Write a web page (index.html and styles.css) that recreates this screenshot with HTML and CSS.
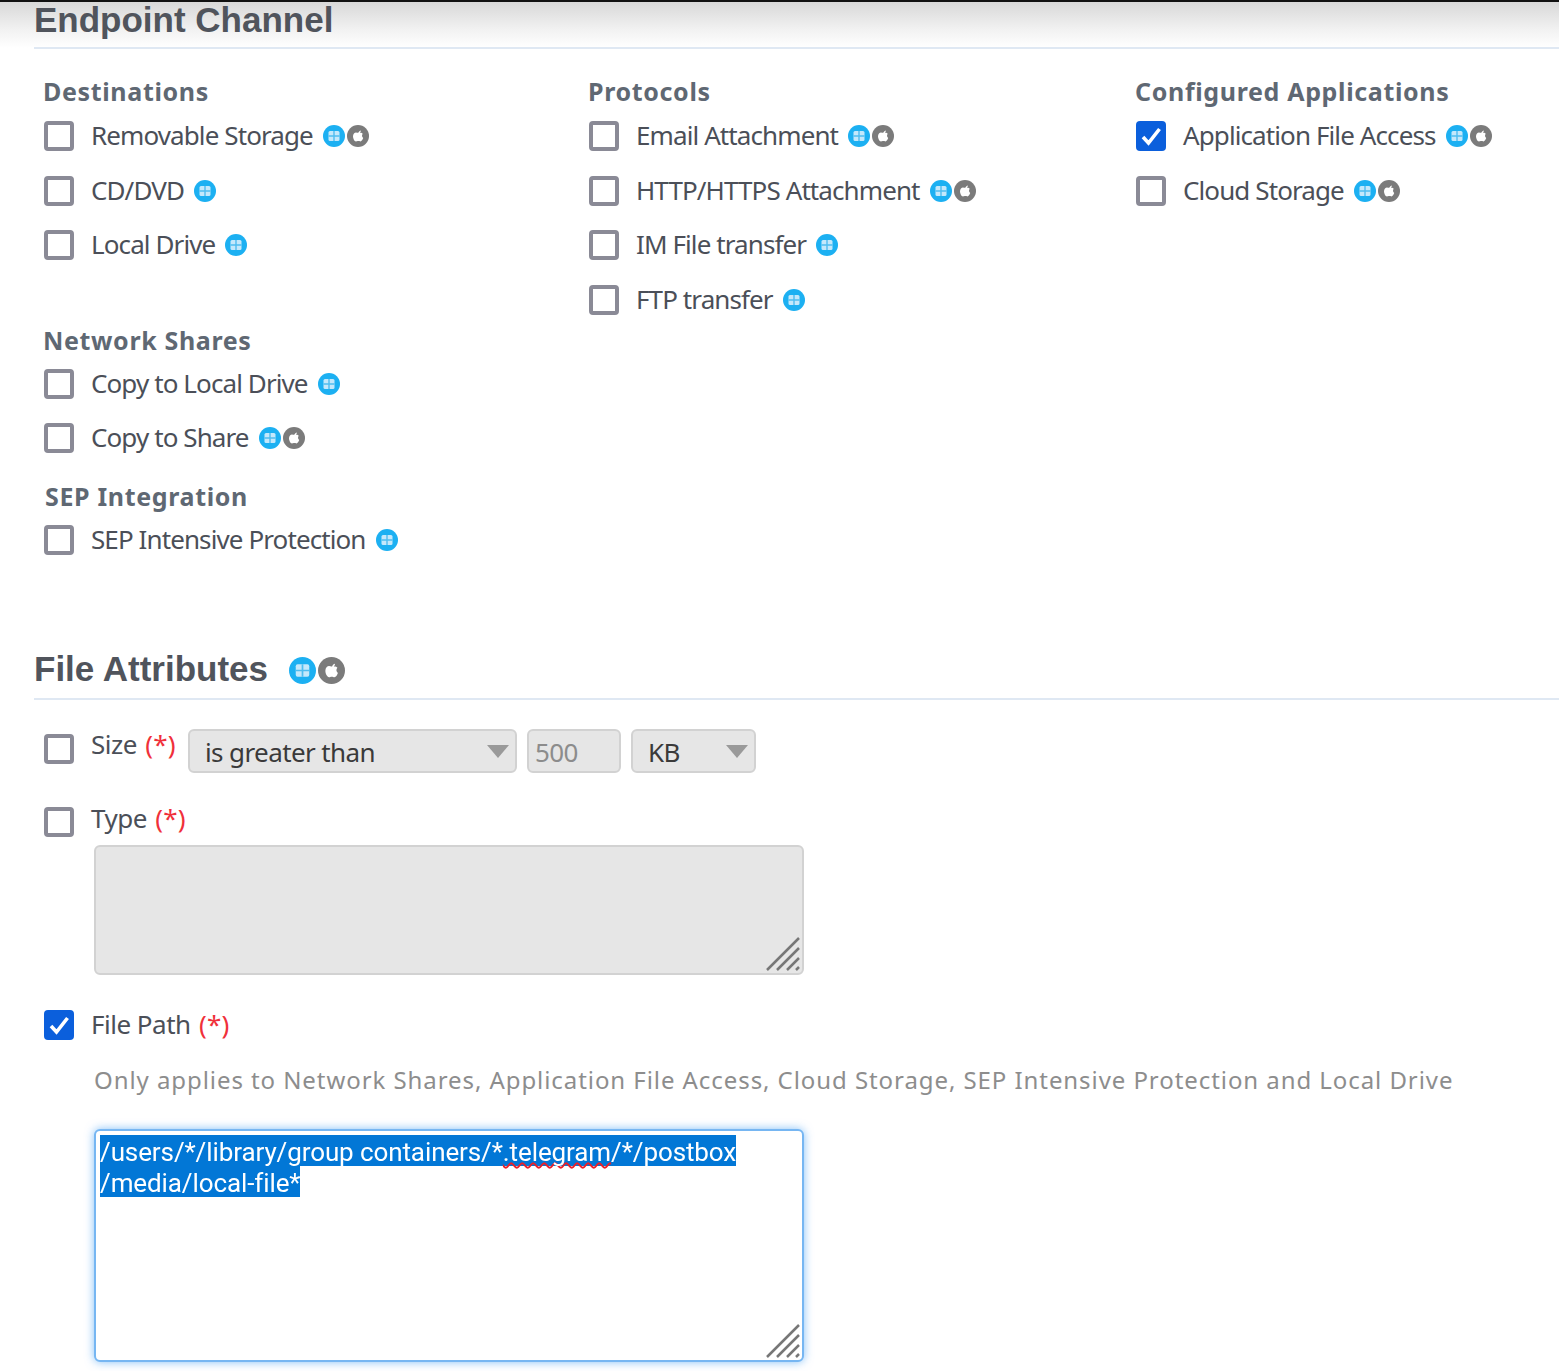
FILE: index.html
```html
<!DOCTYPE html>
<html lang="en">
<head>
    <meta charset="UTF-8">
    <meta name="viewport" content="width=device-width, initial-scale=1.0">
    <title>Endpoint Channel</title>
    <link rel="stylesheet" href="styles.css">
</head>
<body>
    <svg class="sprites" width="0" height="0" aria-hidden="true">
        <symbol id="win" viewBox="0 0 22 22">
            <circle cx="11" cy="11" r="11" fill="#1cb0f2"/>
            <rect x="5.5" y="6" width="11" height="10" rx="1.5" fill="#c4e8fb"/>
            <path d="M11 6V16M5.5 11H16.5" stroke="#4fbdf0" stroke-width="1.4"/>
        </symbol>
        <symbol id="mac" viewBox="0 0 22 22">
            <circle cx="11" cy="11" r="11" fill="#7b7b7b"/>
            <path d="M11.6 7.6C12 6.6 12.8 5.8 13.8 5.6 13.9 6.4 13.5 7.2 12.9 7.7 14 7.5 15.2 7.9 15.8 8.8 14.6 9.8 14.8 12.2 16.2 13 15.6 14.8 14.6 16.4 13.4 16.4 12.6 16.4 12.2 16 11.2 16 10.2 16 9.8 16.4 9 16.4 7.4 16.4 6 13.4 6 11.2 6 8.8 7.6 7.4 9 7.4 10 7.4 10.8 8 11.6 7.6Z" fill="#fff"/>
        </symbol>
        <symbol id="grip" viewBox="0 0 34 34">
            <path d="M1 33 33 1M11 33 33 11M21 33 33 21M30 33 33 30" stroke="#777" stroke-width="2.5" fill="none"/>
        </symbol>
    </svg>

    <div class="page">
        <h2 class="section-title section-first">Endpoint Channel</h2>

        <div class="channels">
            <div class="channel-col">
                <h3 class="group-title">Destinations</h3>
                <div class="row"><span class="check"></span><span class="row-label">Removable Storage</span><span class="os"><svg><use href="#win"/></svg><svg><use href="#mac"/></svg></span></div>
                <div class="row"><span class="check"></span><span class="row-label">CD/DVD</span><span class="os"><svg><use href="#win"/></svg></span></div>
                <div class="row"><span class="check"></span><span class="row-label">Local Drive</span><span class="os"><svg><use href="#win"/></svg></span></div>

                <h3 class="group-title group-network">Network Shares</h3>
                <div class="row"><span class="check"></span><span class="row-label">Copy to Local Drive</span><span class="os"><svg><use href="#win"/></svg></span></div>
                <div class="row"><span class="check"></span><span class="row-label">Copy to Share</span><span class="os"><svg><use href="#win"/></svg><svg><use href="#mac"/></svg></span></div>

                <h3 class="group-title group-sep">SEP Integration</h3>
                <div class="row"><span class="check"></span><span class="row-label">SEP Intensive Protection</span><span class="os"><svg><use href="#win"/></svg></span></div>
            </div>

            <div class="channel-col">
                <h3 class="group-title">Protocols</h3>
                <div class="row"><span class="check"></span><span class="row-label">Email Attachment</span><span class="os"><svg><use href="#win"/></svg><svg><use href="#mac"/></svg></span></div>
                <div class="row"><span class="check"></span><span class="row-label">HTTP/HTTPS Attachment</span><span class="os"><svg><use href="#win"/></svg><svg><use href="#mac"/></svg></span></div>
                <div class="row"><span class="check"></span><span class="row-label">IM File transfer</span><span class="os"><svg><use href="#win"/></svg></span></div>
                <div class="row"><span class="check"></span><span class="row-label">FTP transfer</span><span class="os"><svg><use href="#win"/></svg></span></div>
            </div>

            <div class="channel-col">
                <h3 class="group-title">Configured Applications</h3>
                <div class="row"><span class="check checked"><svg viewBox="0 0 30 30"><path d="M7 16 12.5 22 23.5 8" stroke="#fff" stroke-width="3.6" fill="none"/></svg></span><span class="row-label">Application File Access</span><span class="os"><svg><use href="#win"/></svg><svg><use href="#mac"/></svg></span></div>
                <div class="row"><span class="check"></span><span class="row-label">Cloud Storage</span><span class="os"><svg><use href="#win"/></svg><svg><use href="#mac"/></svg></span></div>
            </div>
        </div>

        <h2 class="section-title section-file">File Attributes <span class="os os-title"><svg><use href="#win"/></svg><svg><use href="#mac"/></svg></span></h2>

        <div class="attrs">
            <div class="attr attr-size">
                <span class="check"></span>
                <span class="attr-label">Size <span class="req">(*)</span></span>
                <div class="field field-op">is greater than<span class="arrow"></span></div>
                <div class="field field-num">500</div>
                <div class="field field-unit">KB<span class="arrow"></span></div>
            </div>

            <div class="attr attr-type">
                <span class="check"></span>
                <span class="attr-label">Type <span class="req">(*)</span></span>
            </div>
            <div class="box box-disabled"><svg class="grip"><use href="#grip"/></svg></div>

            <div class="attr attr-path">
                <span class="check checked"><svg viewBox="0 0 30 30"><path d="M7 16 12.5 22 23.5 8" stroke="#fff" stroke-width="3.6" fill="none"/></svg></span>
                <span class="attr-label">File Path <span class="req">(*)</span></span>
            </div>
            <p class="note">Only applies to Network Shares, Application File Access, Cloud Storage, SEP Intensive Protection and Local Drive</p>
            <div class="box box-focus">
                <div class="path-line"><span class="sel">/users/*/library/group containers/*<span class="misspelt">.telegram</span>/*/postbox</span></div>
                <div class="path-line"><span class="sel">/media/local-file*</span></div>
                <svg class="grip"><use href="#grip"/></svg>
            </div>
        </div>
    </div>
</body>
</html>
```

FILE: styles.css
```css
html, body {
    margin: 0;
    padding: 0;
    background: #fff;
}
body {
    font-family: "Noto Sans", "Open Sans", sans-serif;
    color: #4b4f58;
    height: 1371px;
    overflow: hidden;
}
.sprites {
    position: absolute;
}
.page {
    height: 1371px;
    padding-left: 34px;
    border-top: 2px solid #111;
    box-sizing: border-box;
    background: linear-gradient(#d8d8d8 0, #f2f2f2 28px, #fff 46px);
    background-repeat: no-repeat;
    filter: blur(0.6px);
}

.section-title {
    margin: 0;
    font-family: "Liberation Sans", Arial, sans-serif;
    font-size: 35px;
    font-weight: bold;
    color: #50545c;
    border-bottom: 2px solid #dfe8f3;
}
.section-first {
    height: 45px;
    line-height: 35px;
}
.section-file {
    display: flex;
    align-items: center;
    height: 59px;
    padding-top: 8px;
}

.channels {
    display: grid;
    grid-template-columns: 545px 547px 1fr;
    height: 582px;
    padding: 28px 0 0 10px;
    box-sizing: border-box;
}
.group-title {
    margin: 0 0 4px -1px;
    height: 28px;
    line-height: 28px;
    font-size: 25px;
    font-weight: bold;
    color: #5f6873;
    letter-spacing: 0.65px;
}
.group-network {
    margin: 53px 0 3px -1px;
}
.group-sep {
    margin: 16px 0 3px 1px;
}

.row {
    display: flex;
    align-items: center;
    height: 54.5px;
}
.row-label {
    margin-left: 17px;
    font-size: 26px;
    letter-spacing: -0.9px;
    color: #4b4f58;
    position: relative;
    top: -1px;
}
.check {
    flex: none;
    display: block;
    width: 30px;
    height: 30px;
    box-sizing: border-box;
    border: 4px solid #8a8a96;
    border-radius: 4px;
    background: #fff;
}
.check.checked {
    border: none;
    background: #0b5fdc;
}
.check svg {
    display: block;
    width: 30px;
    height: 30px;
}

.os {
    display: flex;
    margin-left: 10px;
}
.os svg {
    display: block;
    width: 22px;
    height: 22px;
}
.os svg + svg {
    margin-left: 2px;
}
.os-title {
    margin-left: 21px;
    position: relative;
    top: 2px;
}
.os-title svg {
    width: 27px;
    height: 27px;
}

.attrs {
    padding: 0 0 0 10px;
}
.attr {
    display: flex;
    align-items: center;
}
.attr-label {
    margin-left: 17px;
    font-size: 26px;
    letter-spacing: -0.5px;
    position: relative;
    top: -1px;
}
.req {
    margin-left: 2px;
    letter-spacing: 0.3px;
    color: #f0303a;
}
.attr-size {
    height: 44px;
    margin-top: 29px;
}
.attr-size .check {
    position: relative;
    top: -2px;
}
.attr-size .attr-label {
    top: -7px;
}
.attr-type {
    height: 46px;
    margin-top: 26px;
}
.attr-type .attr-label {
    top: -4px;
}
.attr-path {
    height: 46px;
    margin-top: 27px;
}

.field {
    position: relative;
    box-sizing: border-box;
    height: 44px;
    line-height: 42px;
    font-size: 26px;
    letter-spacing: -0.6px;
    color: #3a3a3a;
    background: #e6e6e6;
    border: 2px solid #d2d2d2;
    border-radius: 6px;
    margin-left: 10px;
}
.field-op {
    width: 329px;
    margin-left: 12px;
    padding-left: 15px;
}
.field-num {
    width: 94px;
    padding-left: 6px;
    color: #8c8c8c;
}
.field-unit {
    width: 125px;
    padding-left: 15px;
}
.arrow {
    position: absolute;
    right: 6px;
    top: 14px;
    border-left: 11px solid transparent;
    border-right: 11px solid transparent;
    border-top: 13px solid #9a9a9a;
}

.box {
    position: relative;
    box-sizing: border-box;
    width: 710px;
    margin-left: 50px;
    border-radius: 6px;
}
.box-disabled {
    height: 130px;
    background: #e6e6e6;
    border: 2px solid #d2d2d2;
}
.box-focus {
    height: 233px;
    margin-top: 37px;
    padding: 4px 4px 0;
    background: #fff;
    border: 2px solid #76b6f2;
    box-shadow: 0 0 10px rgba(90, 170, 245, 0.75);
    font-family: Roboto, "Noto Sans", sans-serif;
    font-size: 26px;
    line-height: 31px;
    letter-spacing: -0.1px;
}
.grip {
    position: absolute;
    right: 2px;
    bottom: 2px;
    width: 34px;
    height: 34px;
}
.note {
    margin: 0 0 0 50px;
    padding-top: 20px;
    height: 24px;
    line-height: 24px;
    font-size: 24px;
    letter-spacing: 0.93px;
    white-space: nowrap;
    color: #8d8d8d;
}
.path-line {
    height: 31px;
    white-space: nowrap;
}
.sel {
    display: inline-block;
    height: 31px;
    line-height: 34px;
    background: #0277d6;
    color: #fff;
}
.misspelt {
    text-decoration: underline wavy #e8202a 2px;
    text-decoration-skip-ink: none;
}
```
